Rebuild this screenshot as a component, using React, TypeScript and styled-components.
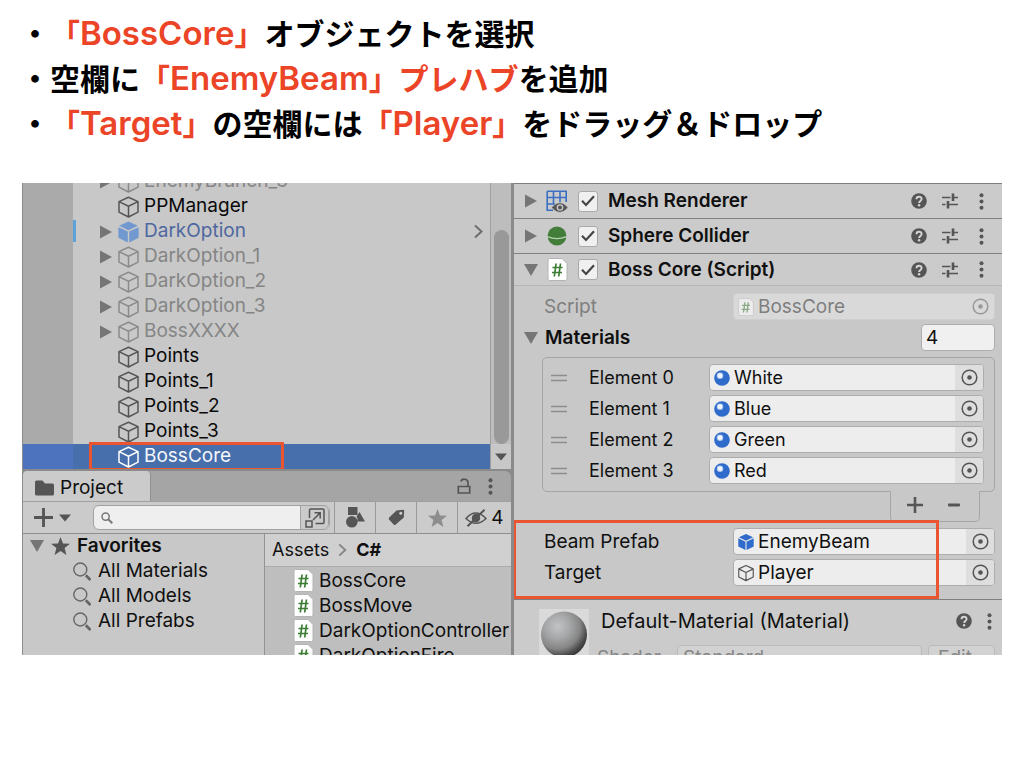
import React from "react";
import styled, { createGlobalStyle, css } from "styled-components";

const GlobalStyle = createGlobalStyle`
  *, *::before, *::after { box-sizing: border-box; }
  body { margin: 0; background: #fff; }
  ul { list-style: none; margin: 0; padding: 0; }
  button, input { font: inherit; color: inherit; margin: 0; padding: 0; border: 0; background: none; }
  svg { display: block; flex: none; }
`;

const uiFont = `"Inter", "Liberation Sans", sans-serif`;
const red = "#ea5430";
const dark = "#555";

/* ---------- slide ---------- */

const Slide = styled.main`
  padding: 10px 22px 0;
  color: #000;
`;

const Notes = styled.ul`
  margin-left: -2px;
  padding-bottom: 38px;
  font-family: "Noto Sans CJK JP", sans-serif;
  font-weight: 700;
  font-size: 30px;
  line-height: 45px;
  text-spacing-trim: space-all;
`;

const Note = styled.li`
  height: 45px;
  white-space: nowrap;
`;

const Mark = styled.em`
  font-style: normal;
  color: #ec4427;
`;

const Latin = styled.span`
  font-family: "Inter", "Liberation Sans", sans-serif;
  font-weight: 600;
  font-size: 33px;
  line-height: 1;
`;

/* ---------- editor frame ---------- */

const Editor = styled.section`
  display: grid;
  grid-template-columns: minmax(0, 489fr) 3px minmax(0, 488fr);
  height: 472px;
  overflow: hidden;
  background: #8a8a8a;
  font-family: ${uiFont};
  font-size: 19px;
  line-height: 24px;
  color: #101010;
`;

const LeftColumn = styled.div`
  display: flex;
  flex-direction: column;
  min-height: 0;
  border-left: 1px solid #8c8c8c;
`;

const Inspector = styled.div`
  grid-column: 3;
  min-height: 0;
  overflow: hidden;
  background: #c8c8c8;
`;

/* ---------- hierarchy ---------- */

const Hierarchy = styled.div`
  display: flex;
  flex: none;
  height: 286px;
  overflow: hidden;
  background: #c8c8c8;
`;

const Tree = styled.ul`
  flex: 1;
  display: flex;
  flex-direction: column;
  justify-content: flex-end;
  background: linear-gradient(to right, #aaa 50px, #c8c8c8 50px);
`;

const TreeRow = styled.li<{ $tone: string; $selected?: boolean }>`
  position: relative;
  flex: none;
  display: flex;
  align-items: center;
  height: 25px;
  padding: 0 7px 0 76px;
  color: ${(p) => p.$tone};
  ${(p) =>
    p.$selected &&
    css`
      background: linear-gradient(to right, #4d73bf 50px, #476fab 50px);
    `}
`;

const Twisty = styled.span`
  width: 19px;
  flex: none;
`;

const TreeName = styled.span`
  flex: 1;
  padding: 0 0 2px 5px;
`;

const Override = styled.span`
  position: absolute;
  left: 50px;
  top: 1px;
  width: 3px;
  height: 22px;
  background: #5ba3dc;
`;

const Callout = styled.span`
  position: absolute;
  z-index: 1;
  border: 3px solid ${red};
  pointer-events: none;
`;

const RowCallout = styled(Callout)`
  left: 66px;
  width: 195px;
  top: -2px;
  bottom: -2px;
`;

const ScrollTrack = styled.div`
  display: flex;
  flex-direction: column;
  align-items: center;
  width: 21px;
  padding-top: 47px;
  border-left: 1px solid #9f9f9f;
  background: #bdbdbd;
`;

const ScrollThumb = styled.div`
  flex: 1;
  width: 15px;
  border-radius: 8px;
  background: #999;
`;

const ScrollDown = styled.button`
  display: grid;
  place-items: center;
  width: 20px;
  height: 25px;
  background: #c8c8c8;
`;

/* ---------- project ---------- */

const TabBar = styled.div`
  flex: none;
  display: flex;
  align-items: stretch;
  height: 30px;
  margin-top: 2px;
  padding-right: 18px;
  border-radius: 6px 6px 0 0;
  background: #a5a5a5;
`;

const Tab = styled.button`
  display: flex;
  align-items: center;
  gap: 6px;
  width: 128px;
  padding: 4px 0 0 12px;
  border-right: 1px solid #909090;
  border-radius: 4px 4px 0 0;
  background: #cbcbcb;
`;

const TabTools = styled.div`
  display: flex;
  align-items: center;
  gap: 17px;
  margin-left: auto;
`;

const IconButton = styled.button`
  display: grid;
  place-items: center;
  flex: none;
  color: ${dark};
`;

const Toolbar = styled.div`
  flex: none;
  display: flex;
  align-items: center;
  height: 33px;
  padding-left: 11px;
  border-top: 1px solid #a0a0a0;
  border-bottom: 1px solid #8f8f8f;
  background: #cbcbcb;
`;

const AddButton = styled(IconButton)`
  display: flex;
  gap: 6px;
  align-items: center;
  margin-right: 22px;
`;

const SearchBox = styled.label`
  flex: 1;
  display: flex;
  align-items: center;
  height: 25px;
  margin-right: 4px;
  border: 1px solid #a2a2a2;
  border-radius: 6px;
  background: #efefef;
  overflow: hidden;
  padding-left: 7px;

  input { flex: 1; min-width: 0; padding-left: 4px; }
`;

const SearchExpand = styled(IconButton)`
  width: 29px;
  height: 25px;
  border: 1px solid #a2a2a2;
  border-radius: 0 6px 6px 0;
  background: #cbcbcb;
`;

const ToolCell = styled.button<{ $wide?: boolean }>`
  display: flex;
  align-items: center;
  justify-content: center;
  gap: 4px;
  flex: none;
  width: ${(p) => (p.$wide ? 54 : 41)}px;
  height: 31px;
  border-left: 1px solid #999;
`;

const ProjectBody = styled.div`
  flex: 1;
  display: grid;
  grid-template-columns: 242px minmax(0, 1fr);
  min-height: 0;
`;

const Favorites = styled.ul`
  background: #c8c8c8;
  border-right: 1px solid #939393;
`;

const FavoriteRow = styled.li<{ $head?: boolean }>`
  display: flex;
  align-items: center;
  gap: 7px;
  height: 25px;
  padding: 0 0 1px ${(p) => (p.$head ? 7 : 50)}px;
  font-weight: ${(p) => (p.$head ? 600 : 400)};
`;

const Assets = styled.div`
  min-width: 0;
  background: #bebebe;
`;

const Breadcrumb = styled.nav`
  display: flex;
  align-items: center;
  gap: 9px;
  height: 33px;
  padding-left: 7px;
  border-bottom: 1px solid #adadad;
  background: #d0d0d0;
  font-size: 18px;

  a { color: inherit; text-decoration: none; }
`;

const AssetList = styled.ul`
  padding-top: 1px;
`;

const AssetRow = styled.li`
  display: flex;
  align-items: center;
  gap: 5px;
  height: 25px;
  padding-left: 28px;
  white-space: nowrap;
`;

/* ---------- inspector ---------- */

const ComponentHeader = styled.header<{ $open?: boolean }>`
  display: flex;
  align-items: center;
  height: ${(p) => (p.$open ? 33 : 35)}px;
  padding: 0 13px 0 10px;
  border-top: 1px solid #7f7f7f;
  border-bottom: ${(p) => (p.$open ? "1px solid #b5b5b5" : "0")};
  background: #cbcbcb;
  font-weight: 600;

  h2 { flex: 1; margin: 0 0 0 10px; font: inherit; }
`;

const Foldout = styled.button`
  display: grid;
  place-items: center;
  width: 14px;
  height: 16px;
  flex: none;
`;

const TypeIcon = styled.span`
  display: grid;
  place-items: center;
  width: 22px;
  margin-left: 8px;
  flex: none;
`;

const Check = styled.span`
  display: grid;
  width: 20px;
  height: 21px;
  margin-left: 10px;
  flex: none;

  > * { grid-area: 1 / 1; }
  svg { align-self: center; justify-self: center; pointer-events: none; }
  input {
    appearance: none;
    width: 20px;
    height: 21px;
    border: 1px solid #a9a9a9;
    border-radius: 3px;
    background: #f0f0f0;
  }
`;

const HeaderTools = styled.div`
  display: flex;
  align-items: center;
  gap: 15px;

  button { width: 16px; }
`;

const Properties = styled.div`
  display: flex;
  flex-direction: column;
  gap: 4px;
  padding: 7px 7px 6px 30px;
`;

const Property = styled.div<{ $dim?: boolean }>`
  display: flex;
  align-items: center;
  height: 27px;
  color: ${(p) => (p.$dim ? "#7f7f7f" : "inherit")};
`;

const PropertyLabel = styled.label`
  flex: 0 0 189px;
`;

const MaterialsProperty = styled(Property)`
  gap: 7px;
  margin-left: -20px;
  font-weight: 600;
`;

const SizeInput = styled.input`
  width: 74px;
  height: 27px;
  margin-left: auto;
  padding-left: 4px;
  border: 1px solid #adadad;
  border-radius: 4px;
  background: #f0f0f0;
  font-weight: 400;
`;

const FieldFrame = styled.div<{ $dim?: boolean }>`
  flex: 1;
  display: flex;
  align-items: center;
  min-width: 0;
  height: 27px;
  padding-left: 4px;
  overflow: hidden;
  border: 1px solid ${(p) => (p.$dim ? "#cfcfcf" : "#adadad")};
  border-radius: 4px;
  background: ${(p) => (p.$dim ? "#d9d9d9" : "#ededed")};

  input { flex: 1; min-width: 0; margin-left: 4px; outline: none; }
`;

const Picker = styled.button<{ $dim?: boolean }>`
  display: grid;
  place-items: center;
  width: 28px;
  height: 25px;
  flex: none;
  background: ${(p) => (p.$dim ? "#d9d9d9" : "#dedede")};
  color: ${(p) => (p.$dim ? "#999" : dark)};
`;

const ElementList = styled.ul`
  display: flex;
  flex-direction: column;
  gap: 4px;
  margin: 0 7px 0 28px;
  padding: 6px 10px 7px 8px;
  border: 1px solid #a5a5a5;
  border-radius: 5px;
`;

const ElementRow = styled.li`
  display: flex;
  align-items: center;
  font-size: 18px;
`;

const ElementLabel = styled.label`
  flex: 0 0 120px;
  margin-left: 22px;
`;

const ListFooter = styled.div`
  display: flex;
  justify-content: space-between;
  width: 90px;
  height: 31px;
  margin: -1px 22px 0 auto;
  padding: 0 19px 3px 16px;
  border: 1px solid #a5a5a5;
  border-top-color: #c8c8c8;
  border-radius: 0 0 5px 5px;
  background: #c8c8c8;
`;

const References = styled.div`
  position: relative;
  display: flex;
  flex-direction: column;
  gap: 4px;
  padding: 6px 7px 13px 30px;
`;

const ReferencesCallout = styled(Callout)`
  left: -1px;
  right: 63px;
  top: -2px;
  bottom: 0;
`;

const MaterialPanel = styled.section`
  display: flex;
  align-items: flex-start;
  padding: 9px 7px 0 25px;
  border-top: 1px solid #7f7f7f;
  background: #cbcbcb;
`;

const Preview = styled.div`
  width: 50px;
  height: 50px;
  flex: none;
  background: #dadada;
`;

const MaterialInfo = styled.div`
  flex: 1;
  min-width: 0;
  margin-left: 8px;
`;

const MaterialTitle = styled.div`
  display: flex;
  align-items: center;
  height: 24px;

  h2 { flex: 1; margin: 0 0 0 4px; font-size: 20px; font-weight: 400; }
`;

const MaterialTools = styled(HeaderTools)`
  gap: 9px;
  margin-right: -2px;
`;

const ShaderRow = styled.div`
  display: flex;
  align-items: center;
  gap: 6px;
  height: 26px;
  margin-top: 12px;
  color: #858585;

  label { width: 74px; }
`;

const ShaderSelect = styled.select`
  appearance: none;
  flex: 1;
  height: 26px;
  padding-left: 5px;
  border: 1px solid #bababa;
  border-radius: 4px;
  background: #d2d2d2;
  font: inherit;
  color: inherit;
`;

const EditButton = styled.button`
  width: 67px;
  height: 26px;
  padding-left: 9px;
  border: 1px solid #bababa;
  border-radius: 4px;
  background: #d2d2d2;
  text-align: left;
`;

/* ---------- icons ---------- */

const Cube = ({ color, w = 21, h = 22 }: { color: string; w?: number; h?: number }) => (
  <svg width={w} height={h} viewBox="0 0 21 22" fill="none" stroke={color} strokeWidth="1.5" strokeLinejoin="round">
    <path d="M10.5 1.2 20 5.6V16.2L10.5 21 1 16.2V5.6ZM1 5.6 10.5 10.2 20 5.6M10.5 10.2V21" />
  </svg>
);

const SolidCube = ({ color, w = 21, h = 22 }: { color: string; w?: number; h?: number }) => (
  <svg width={w} height={h} viewBox="0 0 21 22" fill={color}>
    <path d="M10.5.6 19.8 4.8 10.5 9.2 1.2 4.8Z" />
    <path d="M.4 6.2 9.8 10.6V21.6L.4 16.8Z" />
    <path d="M20.6 6.2 11.2 10.6V21.6L20.6 16.8Z" />
  </svg>
);

const Triangle = ({ down, color = "#757575" }: { down?: boolean; color?: string }) => (
  <svg width="14" height="14" viewBox="0 0 14 14" fill={color}>
    <path d={down ? "M0 1H14L7 13Z" : "M1 0.5 13 7 1 13.5Z"} />
  </svg>
);

const Caret = () => (
  <svg width="12" height="8" viewBox="0 0 12 8" fill={dark}>
    <path d="M0 0.5H12L6 7.5Z" />
  </svg>
);

const Chevron = ({ color = "#6f6f6f", s = 15 }: { color?: string; s?: number }) => (
  <svg width="9" height={s} viewBox="0 0 9 15" fill="none" stroke={color} strokeWidth="2">
    <path d="M1 1.5 7.5 7.5 1 13.5" />
  </svg>
);

const Dots = () => (
  <svg width="5" height="17" viewBox="0 0 5 17" fill={dark}>
    <circle cx="2.5" cy="2.3" r="2" />
    <circle cx="2.5" cy="8.5" r="2" />
    <circle cx="2.5" cy="14.7" r="2" />
  </svg>
);

const Help = () => (
  <svg width="16" height="16" viewBox="0 0 16 16">
    <circle cx="8" cy="8" r="7.8" fill={dark} />
    <path d="M5.5 6.2C5.5 3 10.6 3 10.6 6.1 10.6 7.9 8.1 7.9 8.1 10" fill="none" stroke="#d6d6d6" strokeWidth="1.9" />
    <circle cx="8.1" cy="12.3" r="1.2" fill="#d6d6d6" />
  </svg>
);

const Presets = () => (
  <svg width="16" height="16" viewBox="0 0 16 16" fill="none" stroke={dark}>
    <path d="M0 4.5H8.5M12 4.5H16M0 11.5H3.5M7 11.5H16" strokeWidth="1.7" />
    <path d="M11 .5V8M6 8V15.5" strokeWidth="2.6" />
  </svg>
);

const MeshIcon = () => (
  <svg width="22" height="23" viewBox="0 0 22 23" fill="none">
    <path d="M1.2 1.2H20.2V12M1.2 1.2V20.2H7M7.5 1.2V14M14 1.2V12M1.2 7.5H20.2M1.2 14H9" stroke="#3a6fc4" strokeWidth="1.6" />
    <path d="M5.500 17.500Q14 8 22 17.500Q14 27 5.500 17.500Z" fill={dark} stroke="#cbcbcb" strokeWidth=".5" />
    <circle cx="14" cy="17.500" r="3.300" fill="#cbcbcb" />
    <circle cx="14" cy="17.500" r="2" fill={dark} />
  </svg>
);

const SphereIcon = () => (
  <svg width="20" height="20" viewBox="0 0 20 20">
    <circle cx="10" cy="10" r="9.4" fill="#437d3a" />
    <path d="M.6 10.6Q10 14.500 19.400 10.600" fill="none" stroke="#b9d0b5" strokeWidth="1.300" />
  </svg>
);

const ScriptIcon = ({ w = 21, h = 23, faded }: { w?: number; h?: number; faded?: boolean }) => (
  <svg width={w} height={h} viewBox="0 0 20 23" opacity={faded ? 0.5 : 1}>
    <path d="M2 .5H14.5L19.500 5.500V21Q19.500 22.500 18 22.500H2Q.5 22.500 .5 21V2Q.5.5 2 .5Z" fill="#fff" stroke="#b4b4b4" />
    <path d="M8.600 5.500 6.800 18.500M13 5.500 11.200 18.500M5 9.500H15M4.500 14.500H14.500" fill="none" stroke="#3b7d33" strokeWidth="1.700" />
  </svg>
);

const CheckMark = () => (
  <svg width="14" height="12" viewBox="0 0 14 12" fill="none" stroke="#444" strokeWidth="2.2">
    <path d="M1 5.800 5 10 13 1.200" />
  </svg>
);

const Target = () => (
  <svg width="17" height="17" viewBox="0 0 17 17">
    <circle cx="8.5" cy="8.5" r="7.3" fill="none" stroke="currentColor" strokeWidth="1.5" />
    <circle cx="8.5" cy="8.5" r="2.3" fill="currentColor" />
  </svg>
);

const MaterialDot = () => (
  <svg width="16" height="16" viewBox="0 0 16 16">
    <circle cx="8" cy="8" r="7.8" fill="#2f6bcb" />
    <circle cx="6" cy="5.7" r="3.3" fill="#a9c4ee" />
    <circle cx="6" cy="5.7" r="2.4" fill="#f2f6fd" />
  </svg>
);

const Handle = () => (
  <svg width="16" height="8" viewBox="0 0 16 8" stroke="#8d8d8d" strokeWidth="1.5">
    <path d="M0 1.500H16M0 6.500H16" />
  </svg>
);

const Plus = ({ s = 16, t = 2.6 }: { s?: number; t?: number }) => (
  <svg width={s} height={s} viewBox="0 0 16 16" stroke={dark} strokeWidth={t}>
    <path d="M0 8H16M8 0V16" />
  </svg>
);

const Minus = () => (
  <svg width="12" height="4" viewBox="0 0 12 4" fill={dark}>
    <rect y=".6" width="12" height="2.8" rx=".8" />
  </svg>
);

const Folder = () => (
  <svg width="19" height="16" viewBox="0 0 19 16" fill={dark}>
    <path d="M0 2Q0 .5 1.500 .5H7.500L10 3.500H17.500Q19 3.500 19 5V14Q19 15.500 17.500 15.500H1.500Q0 15.500 0 14Z" />
  </svg>
);

const Lock = () => (
  <svg width="14" height="16" viewBox="0 0 14 16" fill="none" stroke={dark} strokeWidth="1.7">
    <path d="M1.300 8.500H12.700V15H1.300ZM11 8V4.500C11 .3 4.500 .3 4 3.500" />
  </svg>
);

const SmallGlass = () => (
  <svg width="12" height="12" viewBox="0 0 12 12" fill="none" stroke="#777">
    <circle cx="4.6" cy="4.6" r="3.6" strokeWidth="1.5" />
    <path d="M7.300 7.300 11.300 11.300" strokeWidth="2" />
  </svg>
);

const Glass = () => (
  <svg width="18" height="19" viewBox="0 0 18 19" fill="none" stroke="#666">
    <circle cx="7.3" cy="7.5" r="6.5" strokeWidth="1.4" />
    <path d="M12.800 13.300 17.500 18" strokeWidth="2.8" />
  </svg>
);

const Star = ({ color = dark }: { color?: string }) => (
  <svg width="19" height="18" viewBox="0 0 19 18" fill={color}>
    <path d="M9.500 0 12 6.400 19 6.800 13.600 11.100 15.400 18 9.500 14.100 3.600 18 5.400 11.100 0 6.800 7 6.400Z" />
  </svg>
);

const ExpandIcon = () => (
  <svg width="20" height="20" viewBox="0 0 20 20" fill="none" stroke={dark} strokeWidth="1.5">
    <path d="M4.500 10V2Q4.500 1 5.500 1H18Q19 1 19 2V14.500Q19 15.500 18 15.500H10.500M1 13H7V19H1ZM8 12 15 5M9.500 4.800H15.200V10.500" />
  </svg>
);

const Shapes = () => (
  <svg width="19" height="21" viewBox="0 0 19 21" fill={dark}>
    <rect x="2" y="0" width="9.5" height="8" />
    <path d="M13.500 5 19 14.500H11Q12 11 10.500 9.500Z" />
    <circle cx="5.8" cy="14.8" r="5.8" />
  </svg>
);

const Tag = () => (
  <svg width="17" height="17" viewBox="0 0 17 17" fill={dark} fillRule="evenodd">
    <path d="M8.500 1.500 15 .8Q16.200 .8 16.200 2L15.800 8.500 7.500 15.800Q6.500 16.500 5.600 15.600L1 10.600Q.3 9.700 1.200 8.600ZM12.800 2.700A1.600 1.600 0 1 0 12.810 2.700Z" />
  </svg>
);

const EyeOff = () => (
  <svg width="22" height="18" viewBox="0 0 22 18" fill="none" stroke={dark} strokeWidth="1.5">
    <path d="M1 9.500Q10.500 -1.500 21 9.500Q11 19 1 9.500Z" />
    <circle cx="11" cy="9" r="3.5" fill={dark} />
    <path d="M2.500 17.300 19.500 .8" strokeWidth="2" />
  </svg>
);

const Ball = () => (
  <svg width="50" height="50" viewBox="0 0 50 50">
    <defs>
      <radialGradient id="ball" cx=".36" cy=".32" r=".76">
        <stop offset="0" stopColor="#c2c3c4" />
        <stop offset=".35" stopColor="#a6a7a8" />
        <stop offset=".65" stopColor="#858585" />
        <stop offset=".85" stopColor="#4a4a4a" />
        <stop offset="1" stopColor="#2c2c2c" />
      </radialGradient>
    </defs>
    <circle cx="25" cy="25.5" r="23" fill="url(#ball)" />
  </svg>
);

/* ---------- composed parts ---------- */

type Node = { name: string; kind: "normal" | "dim" | "prefab" | "selected"; fold?: boolean };

const nodes: Node[] = [
  { name: "EnemyBranch_3", kind: "dim", fold: true },
  { name: "PPManager", kind: "normal" },
  { name: "DarkOption", kind: "prefab", fold: true },
  { name: "DarkOption_1", kind: "dim", fold: true },
  { name: "DarkOption_2", kind: "dim", fold: true },
  { name: "DarkOption_3", kind: "dim", fold: true },
  { name: "BossXXXX", kind: "dim", fold: true },
  { name: "Points", kind: "normal" },
  { name: "Points_1", kind: "normal" },
  { name: "Points_2", kind: "normal" },
  { name: "Points_3", kind: "normal" },
  { name: "BossCore", kind: "selected" },
];

const textTone = { normal: "#0a0a0a", dim: "#858585", prefab: "#4f679f", selected: "#f4f7fb" };
const cubeTone = { normal: "#555", dim: "#8b8b8b", prefab: "#7299cf", selected: "#fff" };

const TreeItem = ({ node }: { node: Node }) => (
  <TreeRow $tone={textTone[node.kind]} $selected={node.kind === "selected"}>
    {node.kind === "prefab" && <Override />}
    <Twisty>{node.fold && <Triangle />}</Twisty>
    {node.kind === "prefab" ? <SolidCube color={cubeTone.prefab} /> : <Cube color={cubeTone[node.kind]} />}
    <TreeName>{node.name}</TreeName>
    {node.kind === "prefab" && <Chevron />}
    {node.kind === "selected" && <RowCallout />}
  </TreeRow>
);

const ComponentTitle = ({ title, icon, open }: { title: string; icon: React.ReactNode; open?: boolean }) => (
  <ComponentHeader $open={open}>
    <Foldout aria-label={`Toggle ${title}`}>
      <Triangle down={open} />
    </Foldout>
    <TypeIcon>{icon}</TypeIcon>
    <Check>
      <input type="checkbox" defaultChecked aria-label={`Enable ${title}`} />
      <CheckMark />
    </Check>
    <h2>{title}</h2>
    <HeaderTools>
      <IconButton aria-label="Help"><Help /></IconButton>
      <IconButton aria-label="Presets"><Presets /></IconButton>
      <IconButton aria-label="More"><Dots /></IconButton>
    </HeaderTools>
  </ComponentHeader>
);

const ObjectField = ({ id, value, icon, dim }: { id: string; value: string; icon: React.ReactNode; dim?: boolean }) => (
  <FieldFrame $dim={dim}>
    {icon}
    <input id={id} defaultValue={value} readOnly />
    <Picker $dim={dim} aria-label="Select object"><Target /></Picker>
  </FieldFrame>
);

export default function App() {
  return (
    <>
      <GlobalStyle />
      <Slide>
        <Notes>
          <Note>・<Mark>「<Latin>BossCore</Latin>」</Mark>オブジェクトを選択</Note>
          <Note>・空欄に<Mark>「<Latin>EnemyBeam</Latin>」プレハブ</Mark>を追加</Note>
          <Note>・<Mark>「<Latin>Target</Latin>」</Mark>の空欄には<Mark>「<Latin>Player</Latin>」</Mark>をドラッグ＆ドロップ</Note>
        </Notes>

        <Editor>
          <LeftColumn>
            <Hierarchy>
              <Tree>
                {nodes.map((n) => <TreeItem key={n.name} node={n} />)}
              </Tree>
              <ScrollTrack>
                <ScrollThumb />
                <ScrollDown aria-label="Scroll down"><Caret /></ScrollDown>
              </ScrollTrack>
            </Hierarchy>

            <TabBar>
              <Tab><Folder />Project</Tab>
              <TabTools>
                <IconButton aria-label="Lock"><Lock /></IconButton>
                <IconButton aria-label="More"><Dots /></IconButton>
              </TabTools>
            </TabBar>

            <Toolbar>
              <AddButton aria-label="Create"><Plus s={19} t={2.4} /><Caret /></AddButton>
              <SearchBox>
                <SmallGlass />
                <input type="text" aria-label="Search" />
                <SearchExpand aria-label="Open search"><ExpandIcon /></SearchExpand>
              </SearchBox>
              <ToolCell aria-label="Filter by type"><Shapes /></ToolCell>
              <ToolCell aria-label="Filter by label"><Tag /></ToolCell>
              <ToolCell aria-label="Favorite"><Star color="#8d8d8d" /></ToolCell>
              <ToolCell $wide><EyeOff />4</ToolCell>
            </Toolbar>

            <ProjectBody>
              <Favorites>
                <FavoriteRow $head><Triangle down /><Star />Favorites</FavoriteRow>
                <FavoriteRow><Glass />All Materials</FavoriteRow>
                <FavoriteRow><Glass />All Models</FavoriteRow>
                <FavoriteRow><Glass />All Prefabs</FavoriteRow>
              </Favorites>
              <Assets>
                <Breadcrumb>
                  <a href="#assets">Assets</a>
                  <Chevron color="#858585" s={14} />
                  <b>C#</b>
                </Breadcrumb>
                <AssetList>
                  {["BossCore", "BossMove", "DarkOptionController", "DarkOptionFire"].map((f) => (
                    <AssetRow key={f}><ScriptIcon />{f}</AssetRow>
                  ))}
                </AssetList>
              </Assets>
            </ProjectBody>
          </LeftColumn>

          <Inspector>
            <ComponentTitle title="Mesh Renderer" icon={<MeshIcon />} />
            <ComponentTitle title="Sphere Collider" icon={<SphereIcon />} />
            <ComponentTitle title="Boss Core (Script)" icon={<ScriptIcon />} open />

            <Properties>
              <Property $dim>
                <PropertyLabel htmlFor="script">Script</PropertyLabel>
                <ObjectField id="script" value="BossCore" icon={<ScriptIcon w={16} h={18} faded />} dim />
              </Property>
              <MaterialsProperty>
                <Foldout aria-label="Toggle Materials"><Triangle down /></Foldout>
                <label htmlFor="size">Materials</label>
                <SizeInput id="size" type="text" defaultValue="4" />
              </MaterialsProperty>
            </Properties>

            <ElementList>
              {["White", "Blue", "Green", "Red"].map((m, i) => (
                <ElementRow key={m}>
                  <Handle />
                  <ElementLabel htmlFor={`element-${i}`}>Element {i}</ElementLabel>
                  <ObjectField id={`element-${i}`} value={m} icon={<MaterialDot />} />
                </ElementRow>
              ))}
            </ElementList>
            <ListFooter>
              <IconButton aria-label="Add element"><Plus /></IconButton>
              <IconButton aria-label="Remove element"><Minus /></IconButton>
            </ListFooter>

            <References>
              <Property>
                <PropertyLabel htmlFor="beam">Beam Prefab</PropertyLabel>
                <ObjectField id="beam" value="EnemyBeam" icon={<SolidCube color="#2f6bcb" w={16} h={18} />} />
              </Property>
              <Property>
                <PropertyLabel htmlFor="target">Target</PropertyLabel>
                <ObjectField id="target" value="Player" icon={<Cube color="#555" w={16} h={18} />} />
              </Property>
              <ReferencesCallout />
            </References>

            <MaterialPanel>
              <Preview><Ball /></Preview>
              <MaterialInfo>
                <MaterialTitle>
                  <h2>Default-Material (Material)</h2>
                  <MaterialTools>
                    <IconButton aria-label="Help"><Help /></IconButton>
                    <IconButton aria-label="More"><Dots /></IconButton>
                  </MaterialTools>
                </MaterialTitle>
                <ShaderRow>
                  <label htmlFor="shader">Shader</label>
                  <ShaderSelect id="shader" defaultValue="Standard">
                    <option>Standard</option>
                  </ShaderSelect>
                  <EditButton>Edit...</EditButton>
                </ShaderRow>
              </MaterialInfo>
            </MaterialPanel>
          </Inspector>
        </Editor>
      </Slide>
    </>
  );
}
